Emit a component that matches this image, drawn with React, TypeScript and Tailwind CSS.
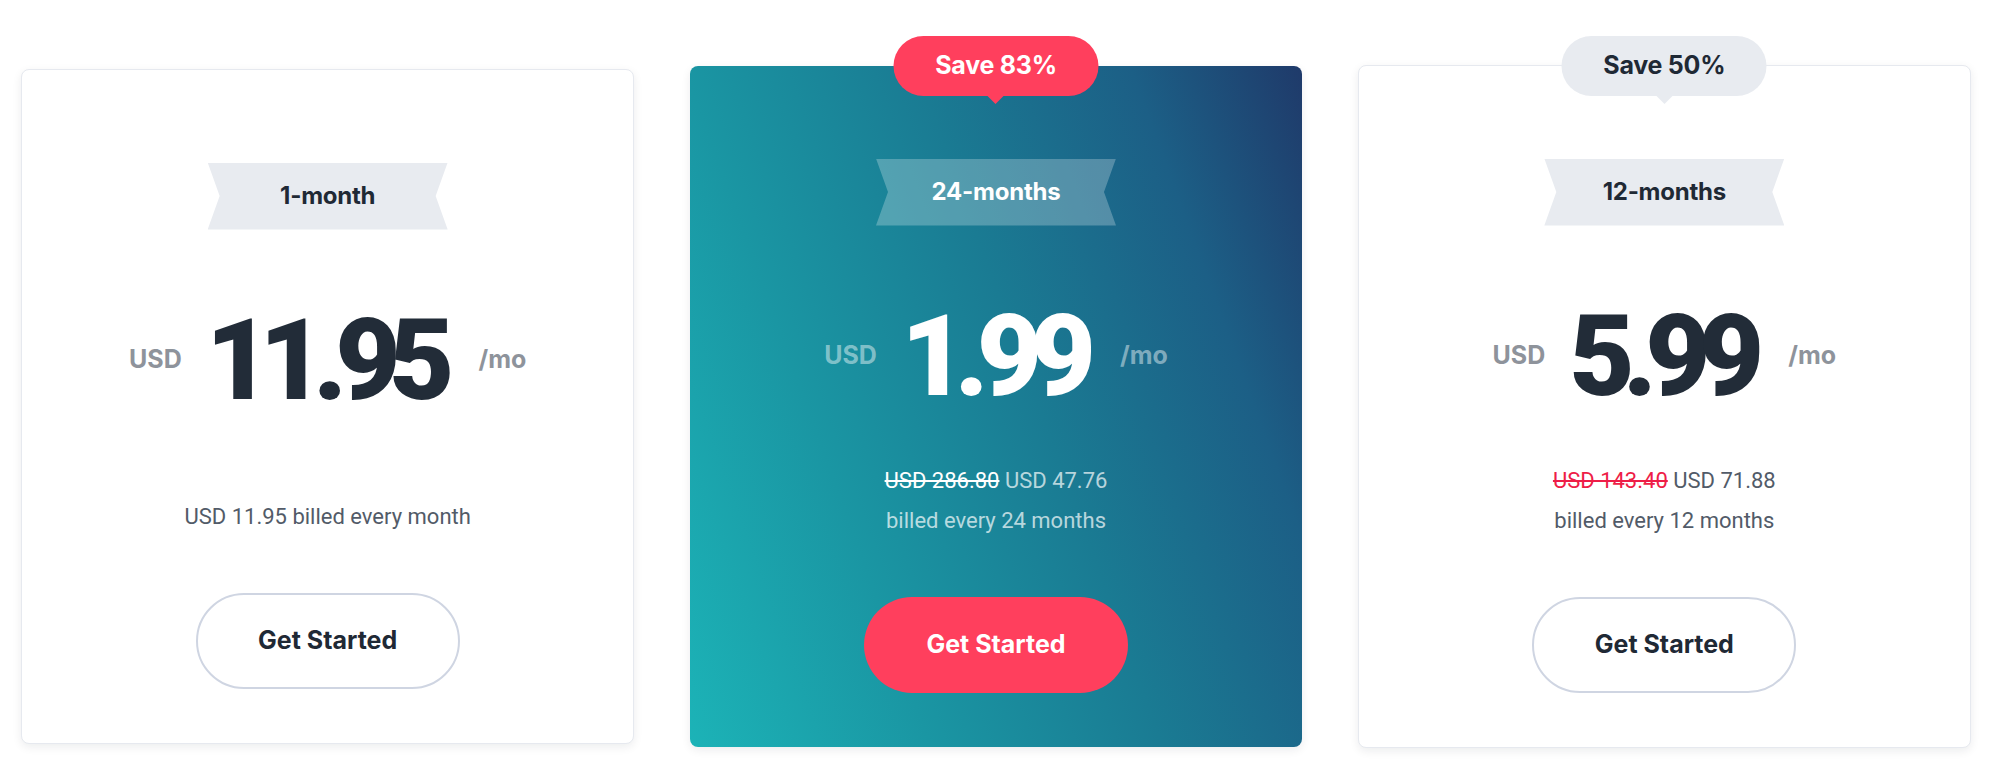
import type { ReactNode } from 'react';

type Plan = {
  term: string;
  price: string;
  save?: string;
  featured?: boolean;
  billing: ReactNode;
  billingClass: string;
};

const head = "font-['Inter',sans-serif]";
const body = "font-['Roboto',sans-serif]";

const plans: Plan[] = [
  {
    term: '1-month',
    price: '11.95',
    billing: <p>USD 11.95 billed every month</p>,
    billingClass: 'mt-[80px] text-[#525b68]',
  },
  {
    term: '24-months',
    price: '1.99',
    save: 'Save 83%',
    featured: true,
    billing: (
      <>
        <p>
          <span className="text-white line-through">USD 286.80</span> USD 47.76
        </p>
        <p>billed every 24 months</p>
      </>
    ),
    billingClass: 'mt-[48px] text-white/70',
  },
  {
    term: '12-months',
    price: '5.99',
    save: 'Save 50%',
    billing: (
      <>
        <p>
          <span className="text-[#ee1d47] line-through">USD 143.40</span> USD 71.88
        </p>
        <p>billed every 12 months</p>
      </>
    ),
    billingClass: 'mt-[48px] text-[#525b68]',
  },
];

function SaveBadge({ label, featured }: { label: string; featured?: boolean }) {
  const color = featured ? 'bg-[#ff3f5d] text-white' : 'bg-[#e8ebf0] text-[#1f2935]';
  const tip = featured ? 'border-t-[#ff3f5d]' : 'border-t-[#e8ebf0]';
  return (
    <div className="absolute left-1/2 top-[-30px] -translate-x-1/2 flex flex-col items-center">
      <div className={`${head} ${color} w-[205px] h-[60px] rounded-full flex items-center justify-center text-[25px] font-bold tracking-[-0.01em]`}>
        {label}
      </div>
      <div className={`w-0 h-0 border-x-[8px] border-x-transparent border-t-[8px] ${tip}`} />
    </div>
  );
}

function PlanCard({ plan }: { plan: Plan }) {
  const f = plan.featured;
  return (
    <div
      className={`relative flex-1 flex flex-col items-center rounded-lg pt-[93px] pb-[54px] shadow-[0_3px_10px_rgba(16,24,40,0.08)] ${
        f
          ? 'bg-[linear-gradient(70deg,#1cb3b7_0%,#1a96a3_28%,#1a7b93_55%,#1c5f86_80%,#1f3a6a_100%)]'
          : 'bg-white border border-[#e6e9ef]'
      }`}
    >
      {plan.save && <SaveBadge label={plan.save} featured={f} />}

      {/* ribbon */}
      <div
        className={`${head} w-[240px] h-[67px] flex items-center justify-center text-[24px] font-bold tracking-[-0.01em] [clip-path:polygon(0_0,100%_0,95%_50%,100%_100%,0_100%,5%_50%)] ${
          f ? 'bg-white/25 text-white' : 'bg-[#e8ebf0] text-[#1f2935]'
        }`}
      >
        {plan.term}
      </div>

      {/* price */}
      <div className="mt-[74px] flex items-center gap-[24px]">
        <span className={`${head} text-[25px] font-bold ${f ? 'text-white/45' : 'text-[#8e939b]'}`}>USD</span>
        <span
          className={`${body} text-[113px] leading-none font-black tracking-[-0.105em] pr-[0.105em] ${
            f ? 'text-white' : 'text-[#222c38]'
          }`}
        >
          {plan.price}
        </span>
        <span className={`${head} text-[25px] font-bold ${f ? 'text-white/45' : 'text-[#8e939b]'}`}>/mo</span>
      </div>

      {/* billing */}
      <div className={`${body} ${plan.billingClass} text-[22px] leading-[40px] text-center`}>{plan.billing}</div>

      <button
        className={`${head} mt-[56px] w-[264px] h-[96px] rounded-full text-[25px] font-bold ${
          f ? 'bg-[#ff3f5d] text-white' : 'bg-white border-2 border-[#cfd5e2] text-[#1f2935]'
        }`}
      >
        Get Started
      </button>
    </div>
  );
}

export default function App() {
  return (
    <div className="h-[769px] w-[2000px] bg-white flex items-center gap-[56px] pl-[21px] pr-[29px] pt-[43px]">
      {plans.map((p) => (
        <PlanCard key={p.term} plan={p} />
      ))}
    </div>
  );
}
